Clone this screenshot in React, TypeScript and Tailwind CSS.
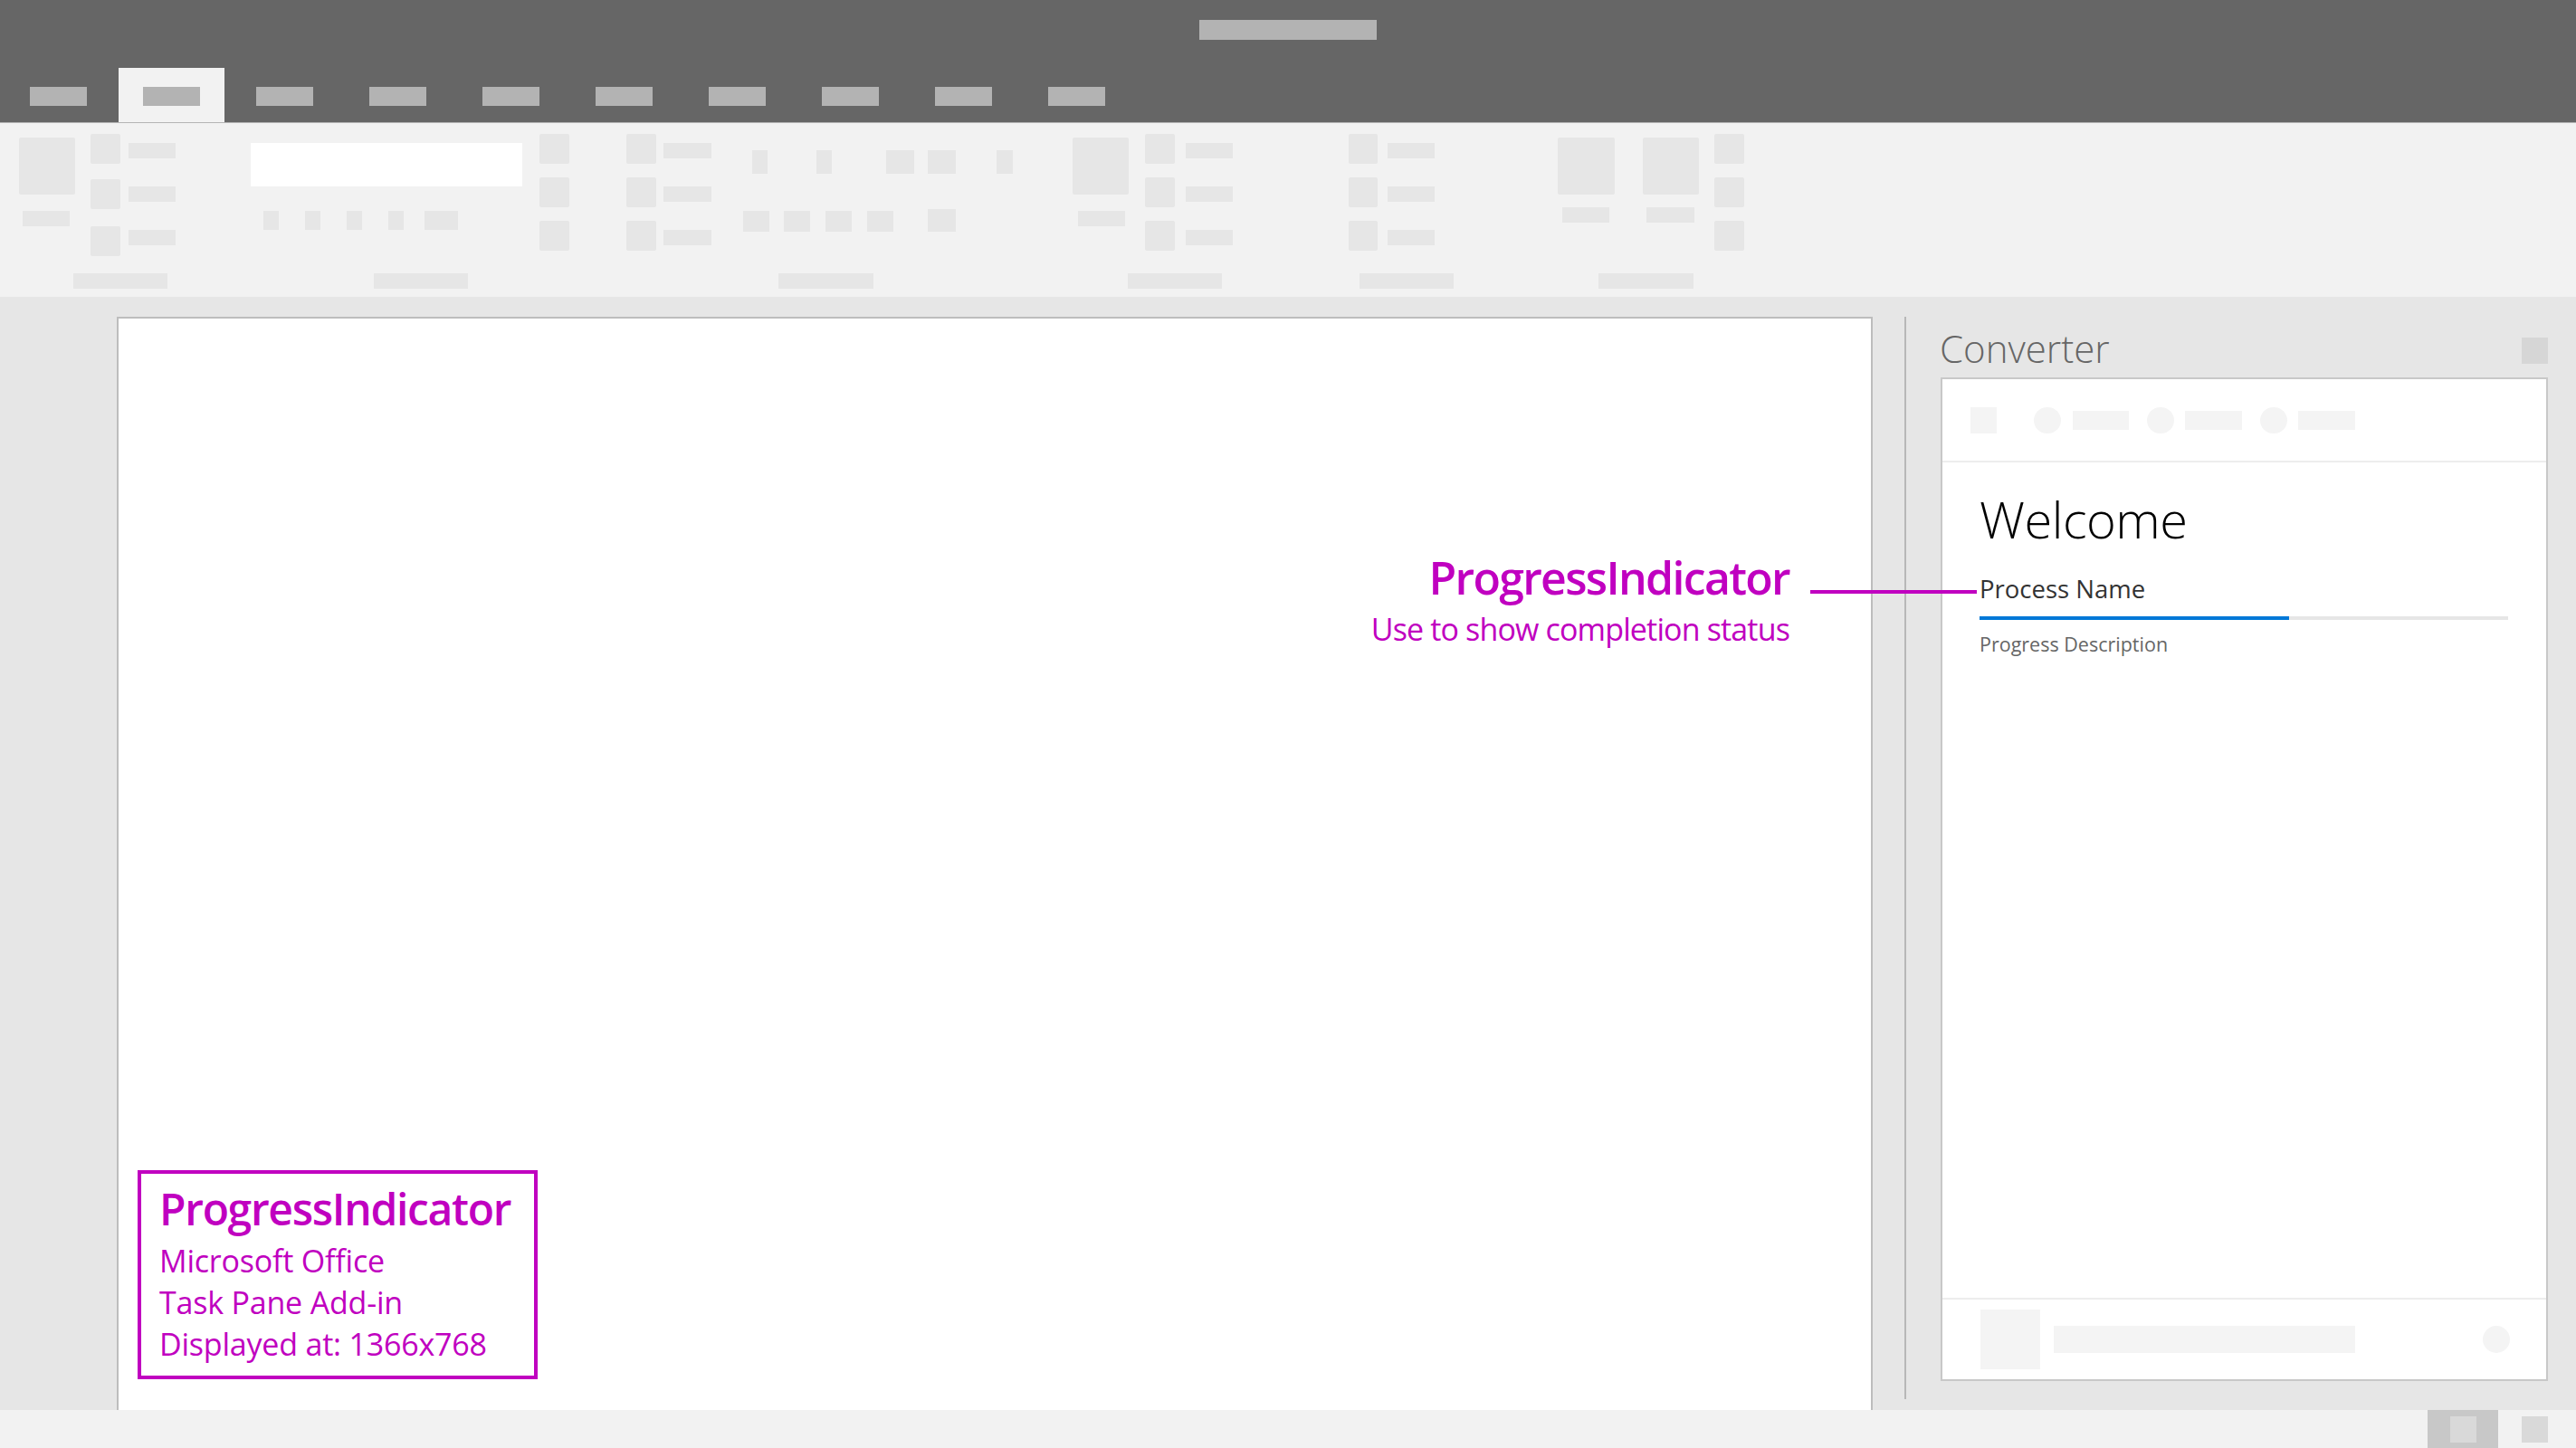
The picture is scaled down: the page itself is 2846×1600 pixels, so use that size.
import React from "react";

const F = { fontFamily: '"Open Sans", "Noto Sans", sans-serif' };

function Sq3({ gaps }: { gaps: [string, string] }) {
  return (
    <div className="flex flex-col">
      <div className="w-full h-[33px] bg-[#e6e6e6] rounded-[2px]" />
      <div className={`w-full h-[33px] bg-[#e6e6e6] rounded-[2px] ${gaps[0]}`} />
      <div className={`w-full h-[33px] bg-[#e6e6e6] rounded-[2px] ${gaps[1]}`} />
    </div>
  );
}

function Labels3() {
  return (
    <div className="flex flex-col pt-[10px]">
      <div className="w-full h-[17px] bg-[#e6e6e6]" />
      <div className="w-full h-[17px] bg-[#e6e6e6] mt-[31px]" />
      <div className="w-full h-[17px] bg-[#e6e6e6] mt-[31px]" />
    </div>
  );
}

function Ribbon() {
  return (
    <div className="h-[192px] bg-[#f2f2f2] flex flex-col">
      <div className="h-[166px] pt-[12px] flex items-start">
        {/* group 1 */}
        <div className="ml-[21px] w-[62px] flex flex-col">
          <div className="mt-[4px] h-[63px] bg-[#e6e6e6] rounded-[2px]" />
          <div className="ml-[4px] mt-[18px] w-[52px] h-[17px] bg-[#e6e6e6]" />
        </div>
        <div className="ml-[17px] w-[33px]">
          <Sq3 gaps={["mt-[17px]", "mt-[19px]"]} />
        </div>
        <div className="ml-[9px] w-[52px]">
          <Labels3 />
        </div>
        {/* group 2 */}
        <div className="ml-[83px] w-[300px] flex flex-col">
          <div className="mt-[10px] h-[48px] bg-white" />
          <div className="mt-[27px] flex h-[21px]">
            <div className="ml-[14px] w-[17px] bg-[#e6e6e6]" />
            <div className="ml-[29px] w-[17px] bg-[#e6e6e6]" />
            <div className="ml-[29px] w-[17px] bg-[#e6e6e6]" />
            <div className="ml-[29px] w-[17px] bg-[#e6e6e6]" />
            <div className="ml-[23px] w-[37px] bg-[#e6e6e6]" />
          </div>
        </div>
        <div className="ml-[19px] w-[33px]">
          <Sq3 gaps={["mt-[15px]", "mt-[15px]"]} />
        </div>
        {/* group 3 */}
        <div className="ml-[63px] w-[33px]">
          <Sq3 gaps={["mt-[15px]", "mt-[15px]"]} />
        </div>
        <div className="ml-[8px] w-[53px]">
          <Labels3 />
        </div>
        <div className="ml-[35px] w-[298px] flex flex-col">
          <div className="mt-[18px] flex h-[26px]">
            <div className="ml-[10px] w-[17px] bg-[#e6e6e6]" />
            <div className="ml-[54px] w-[17px] bg-[#e6e6e6]" />
            <div className="ml-[60px] w-[31px] bg-[#e6e6e6]" />
            <div className="ml-[15px] w-[31px] bg-[#e6e6e6]" />
            <div className="ml-[45px] w-[18px] bg-[#e6e6e6]" />
          </div>
          <div className="mt-[39px] flex items-end h-[25px]">
            <div className="w-[29px] h-[23px] bg-[#e6e6e6]" />
            <div className="ml-[16px] w-[29px] h-[23px] bg-[#e6e6e6]" />
            <div className="ml-[17px] w-[29px] h-[23px] bg-[#e6e6e6]" />
            <div className="ml-[17px] w-[29px] h-[23px] bg-[#e6e6e6]" />
            <div className="ml-[38px] w-[31px] h-[25px] bg-[#e6e6e6]" />
          </div>
        </div>
        {/* group 4 */}
        <div className="ml-[66px] w-[62px] flex flex-col">
          <div className="mt-[4px] h-[63px] bg-[#e6e6e6] rounded-[2px]" />
          <div className="ml-[6px] mt-[18px] w-[52px] h-[17px] bg-[#e6e6e6]" />
        </div>
        <div className="ml-[18px] w-[33px]">
          <Sq3 gaps={["mt-[15px]", "mt-[15px]"]} />
        </div>
        <div className="ml-[12px] w-[52px]">
          <Labels3 />
        </div>
        {/* group 5 */}
        <div className="ml-[128px] w-[32px]">
          <Sq3 gaps={["mt-[15px]", "mt-[15px]"]} />
        </div>
        <div className="ml-[11px] w-[52px]">
          <Labels3 />
        </div>
        {/* group 6 */}
        <div className="ml-[136px] w-[63px] flex flex-col">
          <div className="mt-[4px] h-[63px] bg-[#e6e6e6] rounded-[2px]" />
          <div className="ml-[5px] mt-[14px] w-[52px] h-[17px] bg-[#e6e6e6]" />
        </div>
        <div className="ml-[31px] w-[62px] flex flex-col">
          <div className="mt-[4px] h-[63px] bg-[#e6e6e6] rounded-[2px]" />
          <div className="ml-[4px] mt-[14px] w-[53px] h-[17px] bg-[#e6e6e6]" />
        </div>
        <div className="ml-[17px] w-[33px]">
          <Sq3 gaps={["mt-[15px]", "mt-[15px]"]} />
        </div>
      </div>
      <div className="flex h-[17px]">
        <div className="ml-[81px] w-[104px] bg-[#e6e6e6]" />
        <div className="ml-[228px] w-[104px] bg-[#e6e6e6]" />
        <div className="ml-[343px] w-[105px] bg-[#e6e6e6]" />
        <div className="ml-[281px] w-[104px] bg-[#e6e6e6]" />
        <div className="ml-[152px] w-[104px] bg-[#e6e6e6]" />
        <div className="ml-[160px] w-[105px] bg-[#e6e6e6]" />
      </div>
    </div>
  );
}

function TitleBar() {
  const tabs = Array.from({ length: 10 }, (_, i) => i);
  return (
    <div className="h-[135px] bg-[#666666] flex flex-col">
      <div className="ml-[1325px] mt-[22px] w-[196px] h-[22px] bg-[#b3b3b3]" />
      <div className="mt-[31px] pl-[6px] flex gap-[8px] h-[60px]">
        {tabs.map((i) => (
          <div
            key={i}
            className={
              "w-[117px] h-full flex justify-center pt-[21px] " +
              (i === 1 ? "bg-[#f2f2f2]" : "")
            }
          >
            <div className="w-[63px] h-[21px] bg-[#b3b3b3]" />
          </div>
        ))}
      </div>
    </div>
  );
}

function TaskPane() {
  return (
    <div className="w-[740px] flex flex-col" style={F}>
      <div className="mt-[36px] flex items-start justify-between pl-[37px] pr-[31px]">
        <div className="text-[42px] leading-[42px] font-light text-[#666666]">Converter</div>
        <div className="mt-[9px] w-[29px] h-[29px] bg-[#d6d6d6]" />
      </div>
      <div className="ml-[38px] mt-[11px] w-[671px] h-[1109px] border-2 border-[#c8c8c8] bg-white flex flex-col">
        <div className="h-[90px] flex items-center pl-[31px] border-b-2 border-[#ededed] box-content">
          <div className="w-[29px] h-[29px] bg-[#f4f4f4]" />
          <div className="ml-[41px] w-[30px] h-[29px] rounded-full bg-[#f4f4f4]" />
          <div className="ml-[13px] w-[62px] h-[21px] bg-[#f4f4f4]" />
          <div className="ml-[20px] w-[30px] h-[29px] rounded-full bg-[#f4f4f4]" />
          <div className="ml-[12px] w-[63px] h-[21px] bg-[#f4f4f4]" />
          <div className="ml-[20px] w-[30px] h-[29px] rounded-full bg-[#f4f4f4]" />
          <div className="ml-[12px] w-[63px] h-[21px] bg-[#f4f4f4]" />
        </div>
        <div className="flex-1 pl-[41px] pr-[42px] flex flex-col">
          <div className="mt-[34px] text-[56px] leading-[56px] font-light text-black tracking-[-0.5px]">Welcome</div>
          <div className="mt-[36px] text-[27.5px] leading-[27.5px] text-[#333333]">Process Name</div>
          <div className="mt-[16px] h-[4px] bg-[#e6e6e6] flex">
            <div className="w-[58.6%] h-full bg-[#0078d7]" />
          </div>
          <div className="mt-[16px] text-[21.5px] leading-[21.5px] text-[#666666]">Progress Description</div>
        </div>
        <div className="h-[88px] border-t-2 border-[#ededed] flex items-center pl-[42px] pr-[40px] box-content">
          <div className="w-[66px] h-[66px] bg-[#f4f4f4]" />
          <div className="ml-[15px] w-[333px] h-[30px] bg-[#f4f4f4]" />
          <div className="ml-auto w-[30px] h-[30px] rounded-full bg-[#f4f4f4]" />
        </div>
      </div>
    </div>
  );
}

export default function App() {
  return (
    <div className="relative w-[2846px] h-[1600px] overflow-hidden bg-[#e6e6e6] flex flex-col" style={F}>
      <TitleBar />
      <div className="h-[1px] bg-[#b4b4b4]" />
      <Ribbon />
      <div className="h-[1230px] flex">
        <div className="w-[129px]" />
        <div className="mt-[22px] w-[1940px] bg-white border-t-2 border-x-2 border-[#bdbdbd] flex flex-col justify-between">
          <div className="self-end pr-[90px] pt-[261px] text-right text-[#c000c0]">
            <div className="text-[50px] leading-[50px] font-semibold tracking-[-1.7px]">ProgressIndicator</div>
            <div className="mt-[15px] text-[34px] leading-[34px] tracking-[-0.85px]">Use to show completion status</div>
          </div>
          <div className="ml-[21px] mb-[34px] w-[442px] border-4 border-[#c000c0] pl-[20px] pt-[15px] pb-[12px] text-[#c000c0]">
            <div className="text-[48px] leading-[48px] font-semibold tracking-[-1.3px]">ProgressIndicator</div>
            <div className="mt-[10px] text-[34px] leading-[46px] tracking-[-0.2px]">
              <div>Microsoft Office</div>
              <div>Task Pane Add-in</div>
              <div>Displayed at: 1366x768</div>
            </div>
          </div>
        </div>
        <div className="w-[35px]" />
        <div className="mt-[22px] mb-[12px] w-[2px] bg-[#b8b8b8]" />
        <TaskPane />
      </div>
      <div className="h-[42px] bg-[#f2f2f2] flex justify-end pr-[31px]">
        <div className="w-[78px] h-full bg-[#c8c8c8] flex items-center justify-center">
          <div className="w-[29px] h-[29px] bg-[#d9d9d9]" />
        </div>
        <div className="ml-[26px] self-center w-[29px] h-[29px] bg-[#d9d9d9]" />
      </div>
      <div className="absolute left-[2000px] top-[652px] w-[184px] h-[4px] bg-[#c000c0]" />
    </div>
  );
}
